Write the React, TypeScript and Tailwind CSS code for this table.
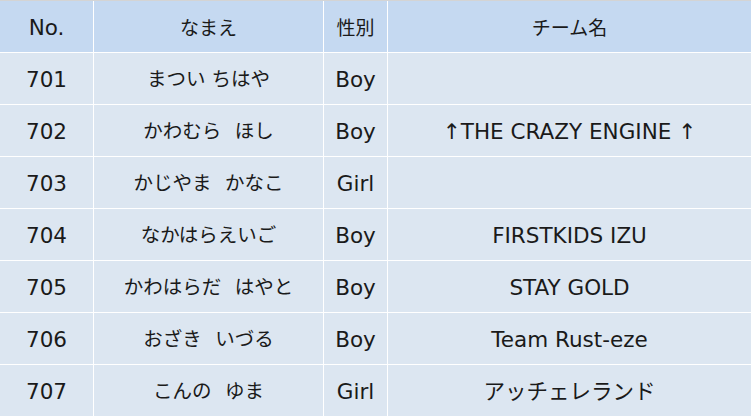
type Member = {
  no: string;
  name: string;
  gender: string;
  team: string;
};

// names use an en space + thin space between family and given name, like the sheet
const members: Member[] = [
  { no: "701", name: "まつい ちはや", gender: "Boy", team: "" },
  { no: "702", name: "かわむら\u2002\u2009ほし", gender: "Boy", team: "↑THE CRAZY ENGINE ↑" },
  { no: "703", name: "かじやま\u2002\u2009かなこ", gender: "Girl", team: "" },
  { no: "704", name: "なかはらえいご", gender: "Boy", team: "FIRSTKIDS IZU" },
  { no: "705", name: "かわはらだ\u2002\u2009はやと", gender: "Boy", team: "STAY GOLD" },
  { no: "706", name: "おざき\u2002\u2009いづる", gender: "Boy", team: "Team Rust-eze" },
  { no: "707", name: "こんの\u2002\u2009ゆま", gender: "Girl", team: "アッチェレランド" },
];

const cell = "flex h-[51px] items-center justify-center whitespace-nowrap pt-[3px]";

export default function App() {
  return (
    <div className="h-[417px] w-[751px] overflow-hidden border-t border-[#d4d4d4] bg-white font-['DejaVu_Sans','Noto_Sans_CJK_JP',sans-serif] text-[21.5px] text-[#1a1a1a]">
      <div className="grid grid-cols-[93px_229px_63px_1fr] gap-px">
        <div className={`${cell} bg-[#c5d9f1]`}>No.</div>
        <div className={`${cell} bg-[#c5d9f1] text-[19px]`}>なまえ</div>
        <div className={`${cell} bg-[#c5d9f1] text-[19px]`}>性別</div>
        <div className={`${cell} bg-[#c5d9f1] text-[19px]`}>チーム名</div>
        {members.map((m) => (
          <Row key={m.no} {...m} />
        ))}
      </div>
    </div>
  );
}

function Row({ no, name, gender, team }: Member) {
  return (
    <>
      <div className={`${cell} bg-[#dce6f1]`}>{no}</div>
      <div className={`${cell} bg-[#dce6f1] text-[19.5px]`}>{name}</div>
      <div className={`${cell} bg-[#dce6f1]`}>{gender}</div>
      <div className={`${cell} bg-[#dce6f1]`}>{team}</div>
    </>
  );
}
